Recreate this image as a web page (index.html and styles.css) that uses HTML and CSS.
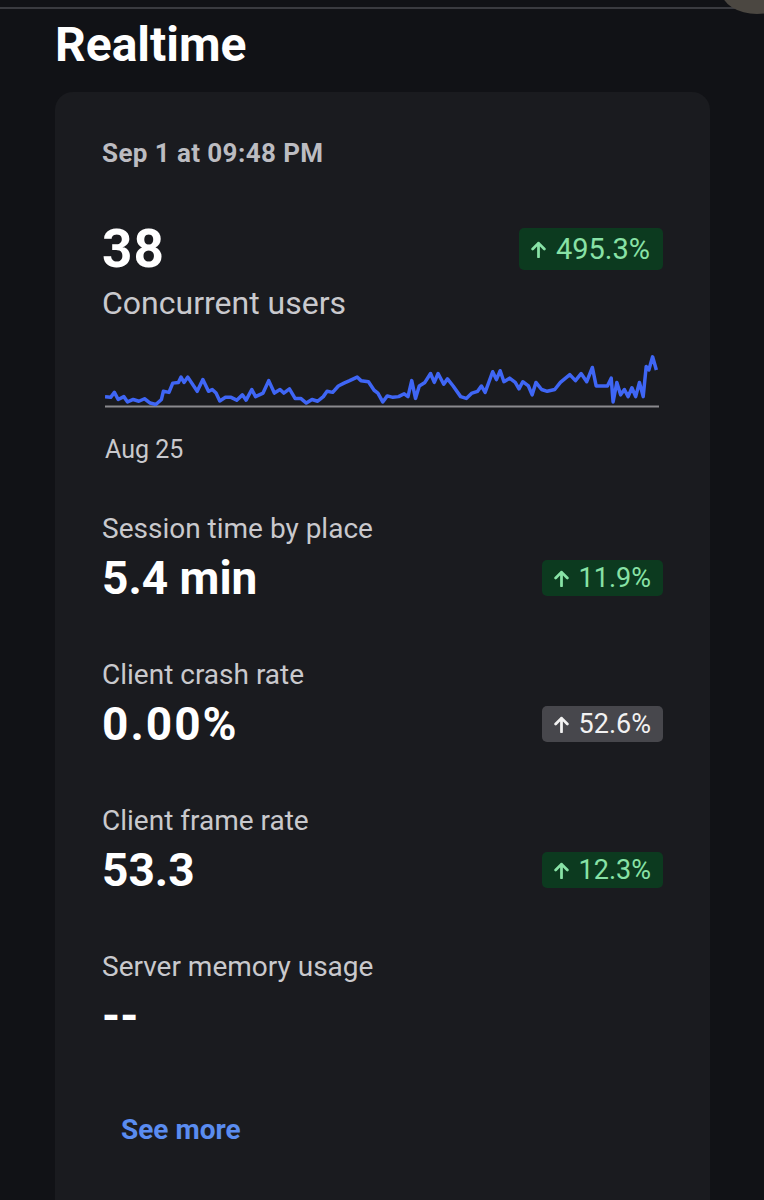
FILE: index.html
```html
<!DOCTYPE html>
<html lang="en">
<head>
    <meta charset="UTF-8">
    <meta name="viewport" content="width=device-width, initial-scale=1.0">
    <title>Realtime</title>
    <link rel="stylesheet" href="styles.css">
</head>
<body>
    <div class="topbar"></div>
    <div class="avatar"></div>

    <h1 class="page-title">Realtime</h1>

    <div class="card">
        <div class="stamp">Sep 1 at 09:48 PM</div>

        <div class="hero-row">
            <div class="hero-value">38</div>
            <span class="badge badge-up badge-big">
                <svg class="arrow" viewBox="0 0 14 16"><path d="M7 15V2M1.5 7.5L7 2l5.5 5.5"/></svg>
                495.3%
            </span>
        </div>
        <div class="hero-label">Concurrent users</div>

        <svg class="chart" viewBox="40 50 1472 152" preserveAspectRatio="none">
            <line class="chart-axis" x1="40" y1="198" x2="1512" y2="198"/>
            <polyline class="chart-line" points="40,170 55,172 65,158 75,178 90,170 100,185 115,178 130,183 145,176 160,188 175,192 190,178 195,155 210,158 220,132 235,130 242,115 250,130 260,115 285,155 300,122 315,155 325,150 335,160 345,182 360,172 375,172 390,180 405,165 415,180 430,150 440,170 460,160 475,125 490,160 505,150 515,160 530,148 545,175 560,175 575,188 590,178 605,183 620,170 630,155 645,158 660,140 675,132 690,125 710,115 720,125 740,128 755,152 765,160 778,185 790,168 805,172 820,170 835,162 845,170 855,125 865,175 875,140 890,130 905,105 915,130 925,105 940,135 950,120 965,140 985,170 1000,175 1015,160 1030,155 1040,140 1050,158 1070,100 1080,122 1090,97 1100,128 1115,118 1130,130 1140,148 1150,128 1165,140 1175,165 1185,130 1200,150 1215,155 1235,150 1250,130 1275,108 1290,125 1305,105 1320,128 1335,88 1345,140 1375,140 1385,118 1390,185 1400,130 1410,165 1420,150 1430,170 1440,145 1450,170 1460,130 1470,170 1478,85 1485,95 1495,58 1505,95"/>
        </svg>
        <div class="chart-date">Aug 25</div>

        <div class="metric">
            <div class="metric-label">Session time by place</div>
            <div class="metric-row">
                <div class="metric-value">5.4 min</div>
                <span class="badge badge-up">
                    <svg class="arrow" viewBox="0 0 14 16"><path d="M7 15V2M1.5 7.5L7 2l5.5 5.5"/></svg>
                    11.9%
                </span>
            </div>
        </div>

        <div class="metric">
            <div class="metric-label">Client crash rate</div>
            <div class="metric-row">
                <div class="metric-value wide">0.00%</div>
                <span class="badge badge-neutral">
                    <svg class="arrow" viewBox="0 0 14 16"><path d="M7 15V2M1.5 7.5L7 2l5.5 5.5"/></svg>
                    52.6%
                </span>
            </div>
        </div>

        <div class="metric">
            <div class="metric-label">Client frame rate</div>
            <div class="metric-row">
                <div class="metric-value">53.3</div>
                <span class="badge badge-up">
                    <svg class="arrow" viewBox="0 0 14 16"><path d="M7 15V2M1.5 7.5L7 2l5.5 5.5"/></svg>
                    12.3%
                </span>
            </div>
        </div>

        <div class="metric">
            <div class="metric-label">Server memory usage</div>
            <div class="metric-row">
                <div class="metric-value">--</div>
            </div>
        </div>

        <a class="see-more" href="#">See more</a>
    </div>
</body>
</html>
```

FILE: styles.css
```css
body {
    font-family: Roboto, "Liberation Sans", sans-serif;
    margin: 0;
    padding: 0;
    background-color: #111216;
    color: #fff;
    overflow: hidden;
}
.topbar {
    height: 7px;
    border-bottom: 2px solid #3a3b40;
}
.avatar {
    position: absolute;
    top: -30px;
    left: 722px;
    width: 70px;
    height: 44px;
    border-radius: 50%;
    background-color: #4b4741;
}
.page-title {
    font-size: 48px;
    line-height: 50px;
    font-weight: 700;
    margin: 11px 0 22px 55px;
}
.card {
    background-color: #1a1b1f;
    border-radius: 18px;
    margin: 0 54px 0 55px;
    padding: 46px 47px 80px;
}
.stamp {
    font-size: 26px;
    line-height: 30px;
    font-weight: 700;
    color: #bcbcc1;
    letter-spacing: 0.4px;
}
.hero-row {
    display: flex;
    justify-content: space-between;
    align-items: center;
    margin-top: 53px;
}
.hero-value {
    font-size: 53px;
    line-height: 56px;
    font-weight: 700;
    letter-spacing: 1px;
}
.hero-label {
    font-size: 32px;
    line-height: 38px;
    color: #c9c9cd;
    margin-top: 7px;
}
.chart {
    display: block;
    width: 554px;
    height: 54px;
    margin: 32px 0 0 3px;
}
.chart-axis {
    stroke: #8a8a8e;
    stroke-width: 2;
    vector-effect: non-scaling-stroke;
}
.chart-line {
    fill: none;
    stroke: #3f66f5;
    stroke-width: 3.5;
    stroke-linejoin: round;
    vector-effect: non-scaling-stroke;
}
.chart-date {
    font-size: 25px;
    line-height: 28px;
    color: #c9c9cd;
    margin: 28px 0 0 3px;
}
.metric {
    margin-top: 48px;
}
.metric + .metric {
    margin-top: 55px;
}
.metric-label {
    font-size: 28px;
    line-height: 34px;
    color: #c9c9cd;
}
.metric-row {
    display: flex;
    justify-content: space-between;
    align-items: center;
    margin-top: 7px;
}
.metric-value {
    font-size: 46px;
    line-height: 50px;
    font-weight: 700;
}
.metric-value.wide {
    letter-spacing: 2px;
}
.badge {
    display: inline-flex;
    align-items: center;
    gap: 10px;
    height: 36px;
    padding: 0 12px 0 12px;
    border-radius: 5px;
    font-size: 27px;
}
.badge-big {
    height: 42px;
    font-size: 29px;
    padding: 0 13px 0 12px;
}
.badge-up {
    background-color: #0c3a1f;
    color: #88e2a6;
}
.badge-neutral {
    background-color: #47474c;
    color: #f2f2f2;
}
.arrow {
    width: 15px;
    height: 17px;
    fill: none;
    stroke: currentColor;
    stroke-width: 2.6;
    stroke-linecap: round;
    stroke-linejoin: round;
}
.see-more {
    display: block;
    margin: 73px 0 0 19px;
    font-size: 28px;
    line-height: 32px;
    font-weight: 700;
    color: #5a8cf0;
    text-decoration: none;
}
```
